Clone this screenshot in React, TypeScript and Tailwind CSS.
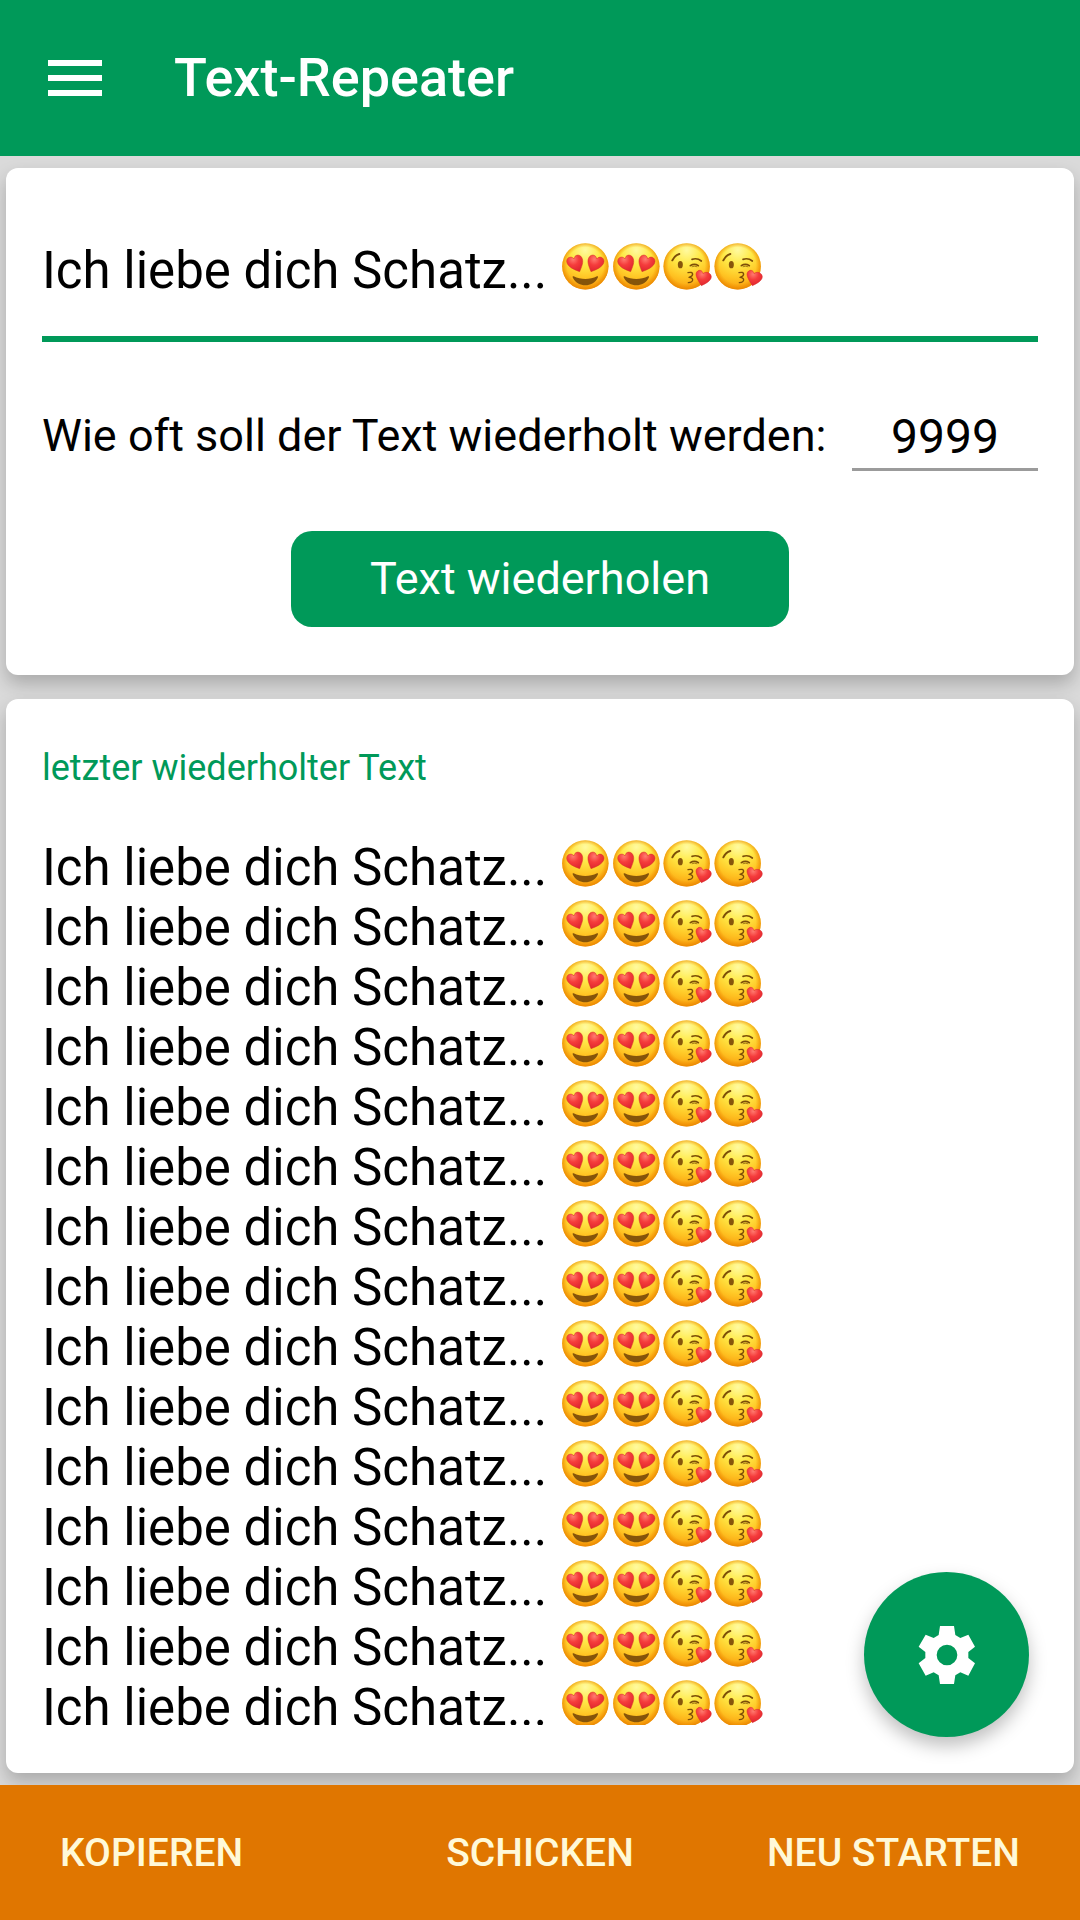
import React, { useState } from "react";

const LINES = Array.from({ length: 15 }, (_, i) => i);

function EmojiDefs() {
  return (
    <svg className="absolute size-0" aria-hidden="true">
      <defs>
        <radialGradient id="face" cx="0.5" cy="0.15" r="0.88">
          <stop offset="0" stopColor="#fffaa0" />
          <stop offset="0.35" stopColor="#ffea48" />
          <stop offset="0.68" stopColor="#ffc524" />
          <stop offset="1" stopColor="#f89a0c" />
        </radialGradient>
        <radialGradient id="rim" cx="0.5" cy="0.48" r="0.53">
          <stop offset="0.74" stopColor="#f09000" stopOpacity="0" />
          <stop offset="1" stopColor="#e88400" stopOpacity="0.95" />
        </radialGradient>
        <radialGradient id="heart" cx="0.4" cy="0.25" r="0.8">
          <stop offset="0" stopColor="#ff7c70" />
          <stop offset="0.45" stopColor="#f53c3c" />
          <stop offset="1" stopColor="#dc222e" />
        </radialGradient>
        <symbol id="love" viewBox="0 0 153 153">
          <circle cx="76" cy="76" r="69.5" fill="url(#face)" />
          <circle cx="76" cy="76" r="69.5" fill="url(#rim)" />
          <path
            d="M59 92C45 87 22 78 20 62C19 49 34 43 42 54C43 41 58 38 65 49C73 62 64 79 59 92Z"
            fill="url(#heart)"
            stroke="#d43a20"
            strokeWidth="1.5"
          />
          <path
            d="M93 92C107 87 130 78 132 62C133 49 118 43 110 54C109 41 94 38 87 49C79 62 88 79 93 92Z"
            fill="url(#heart)"
            stroke="#d43a20"
            strokeWidth="1.5"
          />
          <path
            d="M41 106C62 117 90 117 111 106C114 105 115 107 113 111C98 140 54 140 39 111C37 107 38 105 41 106Z"
            fill="#85540a"
          />
        </symbol>
        <symbol id="kiss" viewBox="0 0 153 153">
          <circle cx="74" cy="76" r="69.5" fill="url(#face)" />
          <circle cx="74" cy="76" r="69.5" fill="url(#rim)" />
          <g fill="none" stroke="#7d4e08" strokeWidth="5" strokeLinecap="round" strokeLinejoin="round">
            <path d="M31 58Q38 43 52 39" strokeWidth="6" />
            <path d="M90 55Q106 50 118 60" />
            <path d="M85 74Q97 66 109 74" />
            <path d="M90 77Q97 74 105 77" strokeWidth="2" />
            <path d="M78 95Q91 92 92 99Q92 106 81 109Q92 110 92 117Q91 124 79 125" strokeWidth="4" />
          </g>
          <ellipse cx="55" cy="71" rx="7.5" ry="11" fill="#87560b" />
          <path
            d="M118 134C111 122 97 103 104 93C111 84 122 88 123 98C132 90 147 95 148 107C147 121 130 128 118 134Z"
            fill="url(#heart)"
            stroke="#d92b2b"
            strokeWidth="1.5"
          />
        </symbol>
      </defs>
    </svg>
  );
}

function Emojis() {
  return (
    <span className="flex" role="img" aria-label="😍😍😘😘">
      {["#love", "#love", "#kiss", "#kiss"].map((href, i) => (
        <svg key={i} className="size-[51px]" aria-hidden="true">
          <use href={href} />
        </svg>
      ))}
    </span>
  );
}

const card = "rounded-xl bg-white px-9 shadow-[0_9px_18px_rgba(0,0,0,0.22)]";

export default function App() {
  const [text, setText] = useState("Ich liebe dich Schatz... ");
  const [count, setCount] = useState("9999");

  return (
    <div className="flex h-screen flex-col bg-[#dadada] font-[Roboto,sans-serif] text-black">
      <EmojiDefs />

      <header className="flex h-[156px] shrink-0 items-center gap-[72px] bg-[#009959] px-12 text-white">
        <button type="button" aria-label="Menü" className="flex w-[54px] flex-col gap-[9px]">
          <span className="h-[6px] w-full bg-white" />
          <span className="h-[6px] w-full bg-white" />
          <span className="h-[6px] w-full bg-white" />
        </button>
        <h1 className="text-[54px] leading-[64px] font-medium">Text-Repeater</h1>
      </header>

      <main className="flex min-h-0 flex-1 flex-col gap-6 px-[6px] py-3">
        <section className={`${card} shrink-0 pt-[73px] pb-12`}>
          <div className="flex items-start border-b-[6px] border-[#009959] pb-[35px]">
            <input
              type="text"
              aria-label="Text"
              value={text}
              onChange={(e) => setText(e.target.value)}
              className="h-[60px] text-[51px] leading-[60px] outline-none [field-sizing:content]"
            />
            <Emojis />
          </div>

          <div className="mt-[66px] flex items-start justify-between">
            <label htmlFor="count" className="text-[45px] leading-[56px] whitespace-nowrap">
              Wie oft soll der Text wiederholt werden:
            </label>
            <input
              id="count"
              type="text"
              inputMode="numeric"
              value={count}
              onChange={(e) => setCount(e.target.value)}
              className="h-[63px] w-[186px] border-b-[3px] border-[#9b9b9b] pb-1 text-center text-[48px] leading-[56px] outline-none"
            />
          </div>

          <button
            type="button"
            className="mx-auto mt-[60px] block h-24 w-1/2 rounded-[21px] bg-[#009959] text-[45px] leading-[54px] text-white"
          >
            Text wiederholen
          </button>
        </section>

        <section className={`${card} relative flex min-h-0 flex-1 flex-col py-12`}>
          <h2 className="text-[36px] leading-[43px] text-[#009959]">letzter wiederholter Text</h2>
          <div className="mt-12 min-h-0 flex-1 overflow-hidden">
            {LINES.map((n) => (
              <p key={n} className="flex h-[60px] items-start text-[51px] leading-[60px]">
                <span className="whitespace-pre">{"Ich liebe dich Schatz... "}</span>
                <Emojis />
              </p>
            ))}
          </div>
          <button
            type="button"
            aria-label="Einstellungen"
            className="absolute right-[45px] bottom-9 flex size-[165px] items-center justify-center rounded-full bg-[#009959] shadow-[0_9px_18px_rgba(0,0,0,0.25)]"
          >
            <svg viewBox="212 205 216 216" className="size-[72px]" aria-hidden="true">
              <path
                fill="#fff"
                fillRule="evenodd"
                d="M299 226H341L345 253L360 262L384 252L404 288L384 304V322L404 338L384 375L360 365L345 374L341 400H299L295 374L280 365L256 375L235 338L255 322V304L235 288L256 252L280 262L295 253ZM320 282A31 31 0 1 0 320 344A31 31 0 1 0 320 282Z"
              />
            </svg>
          </button>
        </section>
      </main>

      <footer className="relative grid h-[135px] shrink-0 grid-cols-3 items-center bg-[#e07600] px-[60px] text-[39px] leading-[46px] font-medium whitespace-nowrap text-[#fff9d8]">
        <button type="button" className="justify-self-start">KOPIEREN</button>
        <button type="button" className="justify-self-center">SCHICKEN</button>
        <button type="button" className="justify-self-end">NEU STARTEN</button>
      </footer>
    </div>
  );
}
